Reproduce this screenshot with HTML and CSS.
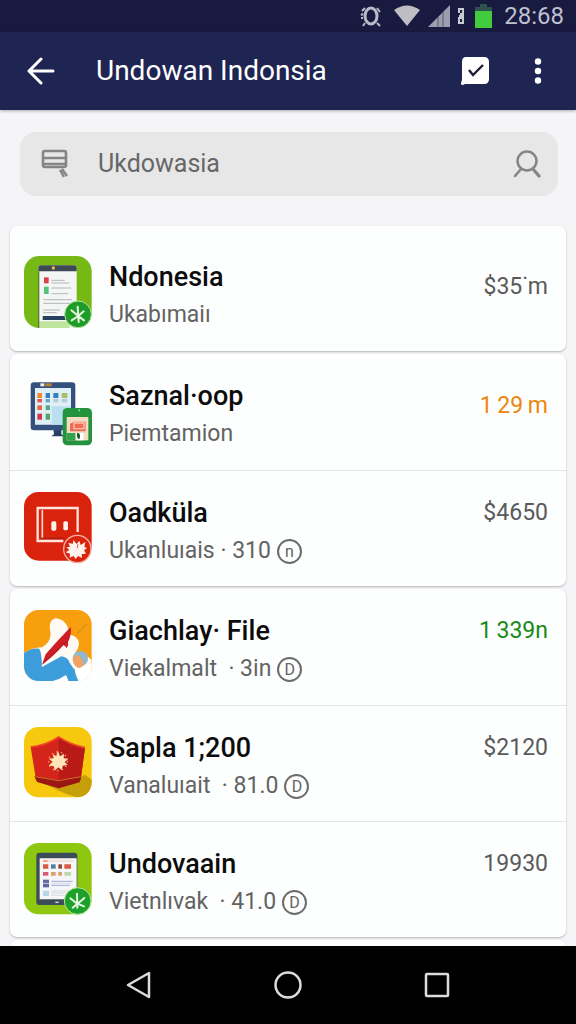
FILE: index.html
```html
<!DOCTYPE html>
<html lang="id">
<head>
    <meta charset="UTF-8">
    <meta name="viewport" content="width=device-width, initial-scale=1.0">
    <title>Undowan Indonsia</title>
    <link rel="stylesheet" href="styles.css">
</head>
<body>

<div class="status-bar">
    <svg width="22" height="24" viewBox="0 0 22 24" fill="none" stroke="#b9bac9">
        <ellipse cx="11" cy="12" rx="6" ry="8" stroke-width="3"/>
        <path d="M5 4L2 7M17 4l3 4M3 10l-2 1M3 14H1M5 19l-2 3M17 19l3 3" stroke-width="2"/>
    </svg>
    <svg class="wifi" width="26" height="22" viewBox="0 0 26 22">
        <path d="M0 5Q13-4 26 5L13 21z" fill="#bdbdc3"/>
    </svg>
    <svg class="signal" width="22" height="22" viewBox="0 0 22 22">
        <path d="M0 22L22 0v22z" fill="#9d9ead"/>
        <path d="M10 12v10M15 7v15" stroke="#55566f"/>
    </svg>
    <svg class="sim" width="7" height="18" viewBox="0 0 7 18">
        <path d="M1 6V2h4v5H2M1 11v5h4v-5zM1 9h5" fill="none" stroke="#c9cad4" stroke-width="2"/>
    </svg>
    <svg class="battery" width="17" height="24" viewBox="0 0 17 24">
        <path d="M5 0h7v3h5v4H0V3h5z" fill="#2d5350"/>
        <path d="M0 7h17v17H0z" fill="#43cb3f"/>
    </svg>
    <span class="clock">28:68</span>
</div>

<header class="app-bar">
    <button class="icon-button" aria-label="Back">
        <svg width="28" height="28" viewBox="0 0 28 28" fill="none" stroke="#fff" stroke-width="3" stroke-linecap="round" stroke-linejoin="round">
            <path d="M14 2L2 14l12 12M3 14h23"/>
        </svg>
    </button>
    <h1>Undowan Indonsia</h1>
    <button class="icon-button" aria-label="Done">
        <svg width="28" height="28" viewBox="0 0 28 28">
            <path d="M5 0h18q5 0 5 5v17q0 5-5 5H4q-3 2-4 0 0-2 1-4V5q0-5 4-5z" fill="#fff"/>
            <path d="M8 13l4 5L22 8" fill="none" stroke="#1b1c38" stroke-width="2.4"/>
        </svg>
    </button>
    <button class="icon-button more" aria-label="More">
        <svg width="8" height="28" viewBox="0 0 8 28" fill="#fff">
            <circle cx="4" cy="4.5" r="3.2"/>
            <circle cx="4" cy="14" r="3.2"/>
            <circle cx="4" cy="23.5" r="3.2"/>
        </svg>
    </button>
</header>

<main>
    <form class="search">
        <svg width="28" height="30" viewBox="0 0 28 30" fill="none" stroke="#858585">
            <rect x="2" y="2" width="23" height="16" rx="2" stroke-width="2.6"/>
            <path d="M2 9h23M3 15h21" stroke-width="2.4"/>
            <path d="M19 21l4 7M21 20l5 7" stroke-width="2.4"/>
        </svg>
        <input type="text" id="search" aria-label="Search" placeholder="Ukdowasia">
        <button class="icon-button" type="button" aria-label="Search">
            <svg width="28" height="28" viewBox="0 0 28 28" fill="none" stroke="#858585" stroke-width="2.5" stroke-linecap="round">
                <ellipse cx="14" cy="11" rx="9.5" ry="9.5"/>
                <path d="M8 19l-6 7"/>
                <path d="M20 19l6 7" stroke-width="3.2"/>
            </svg>
        </button>
    </form>

    <section class="card card-first">
        <article class="item">
            <svg class="app-icon" viewBox="0 0 204 216">
                <rect width="203" height="216" rx="46" fill="#76b914"/>
                <path d="M43 216V36q0-8 8-8h99q8 0 8 8v180z" fill="#f4f6f5"/>
                <path d="M43 46V36q0-8 8-8h99q8 0 8 8v10z" fill="#3c4852"/>
                <path d="M46 196h90v20H46z" fill="#bfe49b"/>
                <path d="M44 46v170" stroke="#5b7a35" stroke-width="4"/>
                <circle cx="88" cy="36" r="5" fill="#f3b25e"/>
                <path d="M60 64h14v18H60z" fill="#d6434c"/>
                <path d="M60 92h14v22H60z" fill="#54c47a"/>
                <path d="M82 73h40M82 81h54M82 96h60M82 113h50M58 131h86M58 142h86M58 162h50M58 170h40" stroke="#b3b6ba" stroke-width="3"/>
                <path d="M56 180h70v12H56z" fill="#27405c"/>
                <circle cx="162" cy="175" r="40" fill="#1e9c27" stroke="#b5e3a2" stroke-width="3"/>
                <path d="M161 152l3 46M142 163l21 17 16-14M163 180l-20 13M163 180l17 13" fill="none" stroke="#e8f8e0" stroke-width="6" stroke-linecap="round"/>
            </svg>
            <div class="info">
                <h2>Ndonesia</h2>
                <p>Ukabımaiı</p>
            </div>
            <span class="price low">$35˙m</span>
        </article>
    </section>

    <section class="card">
        <article class="item">
            <svg class="app-icon" viewBox="0 0 204 216">
                <path d="M88 160h24v18l10 6H82l8-6z" fill="#273f65"/>
                <rect x="20" y="22" width="134" height="144" rx="10" fill="#34507f"/>
                <path d="M33 39h108v110H33z" fill="#dfeff5"/>
                <path d="M83 94h58v55H83z" fill="#b9dff0"/>
                <path d="M49 25h12v9H49z" fill="#f5f0df"/>
                <path d="M64 25h19v9H64z" fill="#b9822e"/>
                <path d="M40 54h14v15H40z" fill="#ee8a32"/>
                <path d="M65 54h13v15H65zM88 54h15v15H88z" fill="#347fc4"/>
                <path d="M113 54h17v15h-17z" fill="#a8bf68"/>
                <path d="M40 72h14v10H40z" fill="#df5947"/>
                <path d="M65 72h13v10H65z" fill="#66a4c9"/>
                <path d="M88 72h15v10H88zM113 72h17v10h-17z" fill="#b4cddd"/>
                <path d="M40 91h14v14H40z" fill="#e46943"/>
                <path d="M65 91h13v14H65z" fill="#51a982"/>
                <path d="M40 116h14v18H40z" fill="#ce384c"/>
                <path d="M65 116h13v18H65z" fill="#4ea66b"/>
                <rect x="116" y="99" width="88" height="112" rx="14" fill="#23943d"/>
                <path d="M128 126h65v70h-65z" fill="#f3dcc4"/>
                <path d="M138 146l12-6h35v29h-47z" fill="#ee6d57"/>
                <path d="M150 144h30v17h-30z" fill="none" stroke="#ffc3ac" stroke-width="4"/>
                <path d="M128 174h26v22h-26z" fill="#31a34a"/>
                <path d="M157 174h22v22h-22z" fill="#fff"/>
                <path d="M160 173q12 0 6 20-10-5-6-20z" fill="#145628"/>
                <circle cx="166" cy="106" r="3" fill="#96d39e"/>
            </svg>
            <div class="info">
                <h2>Saznal·oop</h2>
                <p>Piemtamion</p>
            </div>
            <span class="price low orange">1&thinsp;29&thinsp;m</span>
        </article>
        <article class="item">
            <svg class="app-icon" viewBox="0 0 204 216">
                <rect width="203" height="206" rx="44" fill="#d9230d"/>
                <path d="M118 147H41V48h120v72" fill="none" stroke="#ffe3dc" stroke-width="7"/>
                <path d="M55 54v86" stroke="#ffd5cb" stroke-width="5"/>
                <path d="M50 139h70" stroke="#a71f10" stroke-width="4"/>
                <rect x="82" y="88" width="15" height="28" rx="5" fill="#fff0e8"/>
                <rect x="118" y="88" width="14" height="27" rx="5" fill="#fff0e8"/>
                <circle cx="160" cy="171" r="41" fill="#d9230d" stroke="#f4b2a7" stroke-width="4"/>
                <path d="M133 153l14 2 1-11 10 12 8-10 4 13 14-9-3 15 8 3-9 7 6 10-13 1 1 12-12-6-7 9-6-9-12 5 1-12-13-4 11-7-9-8 11-2z" fill="#fff3ee"/>
                <path d="M162 156l-2 12" fill="none" stroke="#db5a48" stroke-width="3"/>
            </svg>
            <div class="info">
                <h2>Oadküla</h2>
                <p>Ukanluıais · 310 <span class="badge">n</span></p>
            </div>
            <span class="price">$4650</span>
        </article>
    </section>

    <section class="card">
        <article class="item">
            <svg class="app-icon" viewBox="0 0 204 216">
                <defs>
                    <clipPath id="tile"><rect width="203" height="213" rx="44"/></clipPath>
                </defs>
                <g clip-path="url(#tile)">
                    <rect width="204" height="213" fill="#f89f10"/>
                    <path d="M0 130q24-18 54-18 32-18 24-53-4-29 17-34 25 1 37 28l6 22q24 2 27 25-2 21-12 28 30 1 50 22v66H0z" fill="#fffaf4"/>
                    <path d="M0 130q20-17 46-14 7 13 8 55l58-32q20 3 24 18l16 24-4 32H0z" fill="#3d9ddb"/>
                    <path d="M52 170l26-46 50-40 8 36q-40 12-84 50z" fill="#fffaf4"/>
                    <path d="M86 213q20-4 40-18l8 18z" fill="#fff"/>
                    <path d="M54 164l11-31q35-41 75-82 4 20-8 46 3 9-4 18-4-8-10-10-24 29-64 59z" fill="#cf1d24"/>
                    <path d="M57 160q34-28 72-66" fill="none" stroke="#861c29" stroke-width="2"/>
                    <path d="M161 70l28-28" stroke="#a97928" stroke-width="2"/>
                    <circle cx="169" cy="146" r="23" fill="#91b8ca"/>
                    <path d="M147 151q1-16 14-15 14 8 18 28-10 17-22 6-9-6-10-19z" fill="#f2a262"/>
                    <path d="M163 213l-12-35 20-4 37-18v57z" fill="#fff"/>
                    <path d="M124 181l27-5q3 18 12 37h-29z" fill="#3d9ddb"/>
                </g>
            </svg>
            <div class="info">
                <h2>Giachlay· File</h2>
                <p>Viekalmalt&nbsp; · 3in <span class="badge">D</span></p>
            </div>
            <span class="price green">1&thinsp;339n</span>
        </article>
        <article class="item">
            <svg class="app-icon" viewBox="0 0 204 216">
                <rect width="203" height="211" rx="44" fill="#f7c90e"/>
                <path d="M24 154l80 29 79-40 20 15v8q-3 42-43 45-38-9-70-27z" fill="#c5a00b"/>
                <path d="M20 60q47-5 84-30 35 23 79 32l-13 96-66 24-68-24z" fill="#d52419"/>
                <path d="M104 30q35 23 79 32l-13 96-66 24z" fill="#b81b16"/>
                <path d="M20 60q47-5 84-30 35 23 79 32" fill="none" stroke="#f3442a" stroke-width="5"/>
                <path d="M31 147l73 13 68-14-5 20-63 18-65-19z" fill="#9b1712"/>
                <path d="M34 149l70 12 66-12" fill="none" stroke="#d66c2b" stroke-width="3"/>
                <path d="M101 70l7 18 12-8-1 14 14 1-11 10 9 9-15 2-2 14-11-9-11 10-3-14-15-1 12-12-12-9 15-1-3-13 11 7z" fill="#ffe4b8"/>
                <circle cx="102" cy="103" r="28" fill="none" stroke="#efaa62" stroke-width="4" stroke-dasharray="4 10"/>
            </svg>
            <div class="info">
                <h2>Sapla 1;200</h2>
                <p>Vanaluıait&nbsp; · 81.0 <span class="badge">D</span></p>
            </div>
            <span class="price">$2120</span>
        </article>
        <article class="item">
            <svg class="app-icon" viewBox="0 0 204 216">
                <rect width="203" height="214" rx="44" fill="#8dc710"/>
                <rect x="37" y="29" width="123" height="157" rx="9" fill="#3d4c59"/>
                <path d="M47 46h111v123H47z" fill="#f6f6f8"/>
                <path d="M57 54h92" stroke="#ead0b9" stroke-width="3"/>
                <path d="M57 54h14" stroke="#f08b4e" stroke-width="4"/>
                <path d="M57 64h16v13H57zM121 64h20v13h-20z" fill="#d85b43"/>
                <path d="M81 64h14v13H81z" fill="#51809c"/>
                <path d="M103 64h11v13h-11z" fill="#9b4335"/>
                <path d="M57 87h16v11H57z" fill="#d75b78"/>
                <path d="M81 87h14v11H81zM103 87h11v11h-11z" fill="#dda06c"/>
                <path d="M121 87h20v11h-20z" fill="#bed8a3"/>
                <path d="M57 110h18v23H57z" fill="#6166a0"/>
                <path d="M57 121h18" stroke="#fff" stroke-width="2"/>
                <path d="M82 115h64M82 127h56" stroke="#98acd9" stroke-width="3"/>
                <path d="M82 121h60M82 144h54M82 150h44M82 157h40" stroke="#c7cbd6" stroke-width="2"/>
                <path d="M57 143h18v16H57z" fill="#b6d5e7"/>
                <path d="M94 178h10" stroke="#d2dade" stroke-width="4"/>
                <circle cx="161" cy="174" r="40" fill="#1ea12b" stroke="#b9e99f" stroke-width="3"/>
                <path d="M159 152l1 42M139 166l21 17 21-18M160 182l-14 12M160 182l20 8" fill="none" stroke="#e5f8df" stroke-width="6" stroke-linecap="round"/>
            </svg>
            <div class="info">
                <h2>Undovaain</h2>
                <p>Vietnlıvak&nbsp; · 41.0 <span class="badge">D</span></p>
            </div>
            <span class="price">19930</span>
        </article>
    </section>

    <section class="card card-next"></section>
</main>

<nav class="nav-bar">
    <button class="icon-button" aria-label="Back">
        <svg width="28" height="28" viewBox="0 0 28 28" fill="none" stroke="#dedcda" stroke-width="2.5" stroke-linejoin="round">
            <path d="M3 14L24 2v24z"/>
        </svg>
    </button>
    <button class="icon-button" aria-label="Home">
        <svg width="28" height="28" viewBox="0 0 28 28" fill="none" stroke="#dedcda" stroke-width="2.5">
            <circle cx="14" cy="14" r="12.5"/>
        </svg>
    </button>
    <button class="icon-button" aria-label="Recent apps">
        <svg width="28" height="28" viewBox="0 0 28 28" fill="none" stroke="#dedcda" stroke-width="2.5">
            <rect x="3" y="3" width="22" height="22" rx="1"/>
        </svg>
    </button>
</nav>

</body>
</html>
```
FILE: styles.css
```css
* {
    box-sizing: border-box;
}

body {
    display: flex;
    flex-direction: column;
    height: 100vh;
    margin: 0;
    font-family: Roboto, sans-serif;
    background-color: #f5f4f6;
    color: #0c0c0c;
}

h1, h2, p {
    margin: 0;
}

svg {
    display: block;
    flex-shrink: 0;
}

.icon-button {
    padding: 0;
    border: 0;
    background: none;
    cursor: pointer;
}

.status-bar {
    display: flex;
    flex-shrink: 0;
    align-items: center;
    justify-content: flex-end;
    height: 32px;
    padding: 0 12px;
    background-color: #191a40;
}

.wifi {
    margin-left: 12px;
}

.signal {
    margin-left: 8px;
}

.sim {
    margin-left: 8px;
}

.battery {
    margin-left: 10px;
}

.clock {
    margin-left: 12px;
    font-size: 24px;
    line-height: 28px;
    color: #bfc0cf;
}

.app-bar {
    display: flex;
    flex-shrink: 0;
    align-items: center;
    height: 78px;
    padding: 0 34px 0 27px;
    background-color: #1f2552;
    box-shadow: 0 1px 3px rgba(0, 0, 0, 0.3);
}

.app-bar h1 {
    flex: 1;
    margin-left: 41px;
    font-size: 28px;
    font-weight: 400;
    line-height: 36px;
    color: #fff;
}

.more {
    margin-left: 45px;
}

main {
    flex: 1;
    min-height: 0;
    padding: 22px 10px 0;
    overflow: hidden;
}

.search {
    display: flex;
    align-items: center;
    height: 64px;
    margin: 0 8px 30px 10px;
    padding: 0 17px 0 21px;
    border-radius: 16px;
    background-color: #e7e7e8;
}

.search input {
    flex: 1;
    min-width: 0;
    margin-left: 29px;
    padding: 0;
    border: 0;
    outline: 0;
    background: none;
    font-family: inherit;
    font-size: 25px;
    line-height: 32px;
}

.search input::placeholder {
    color: #666;
    opacity: 1;
}

.card {
    margin-bottom: 3px;
    border-radius: 7px;
    background-color: #fdfefe;
    box-shadow: 0 1px 2px rgba(0, 0, 0, 0.25);
}

.card-first {
    padding-top: 9px;
}

.card-next {
    height: 60px;
}

.item {
    display: flex;
    align-items: flex-start;
    height: 116px;
    padding: 21px 18px 0 14px;
}

.item + .item {
    border-top: 1px solid #e3e4e6;
}

.app-icon {
    width: 68px;
    height: 72px;
}

.info {
    flex: 1;
    margin-left: 17px;
}

.info h2 {
    font-size: 27px;
    font-weight: 500;
    line-height: 42px;
}

.info p {
    display: flex;
    align-items: center;
    font-size: 23px;
    line-height: 34px;
    color: #636363;
}

.badge {
    width: 25px;
    height: 25px;
    margin-left: 6px;
    border: 2px solid #6c6c6c;
    border-radius: 50%;
    font-size: 16px;
    line-height: 21px;
    text-align: center;
}

.price {
    font-size: 23px;
    line-height: 42px;
    color: #5a5a5a;
}

.low {
    margin-top: 10px;
}

.orange {
    color: #ee850c;
}

.green {
    color: #168a16;
}

.nav-bar {
    display: flex;
    flex-shrink: 0;
    align-items: center;
    justify-content: center;
    gap: 121px;
    height: 78px;
    background-color: #000;
}
```
